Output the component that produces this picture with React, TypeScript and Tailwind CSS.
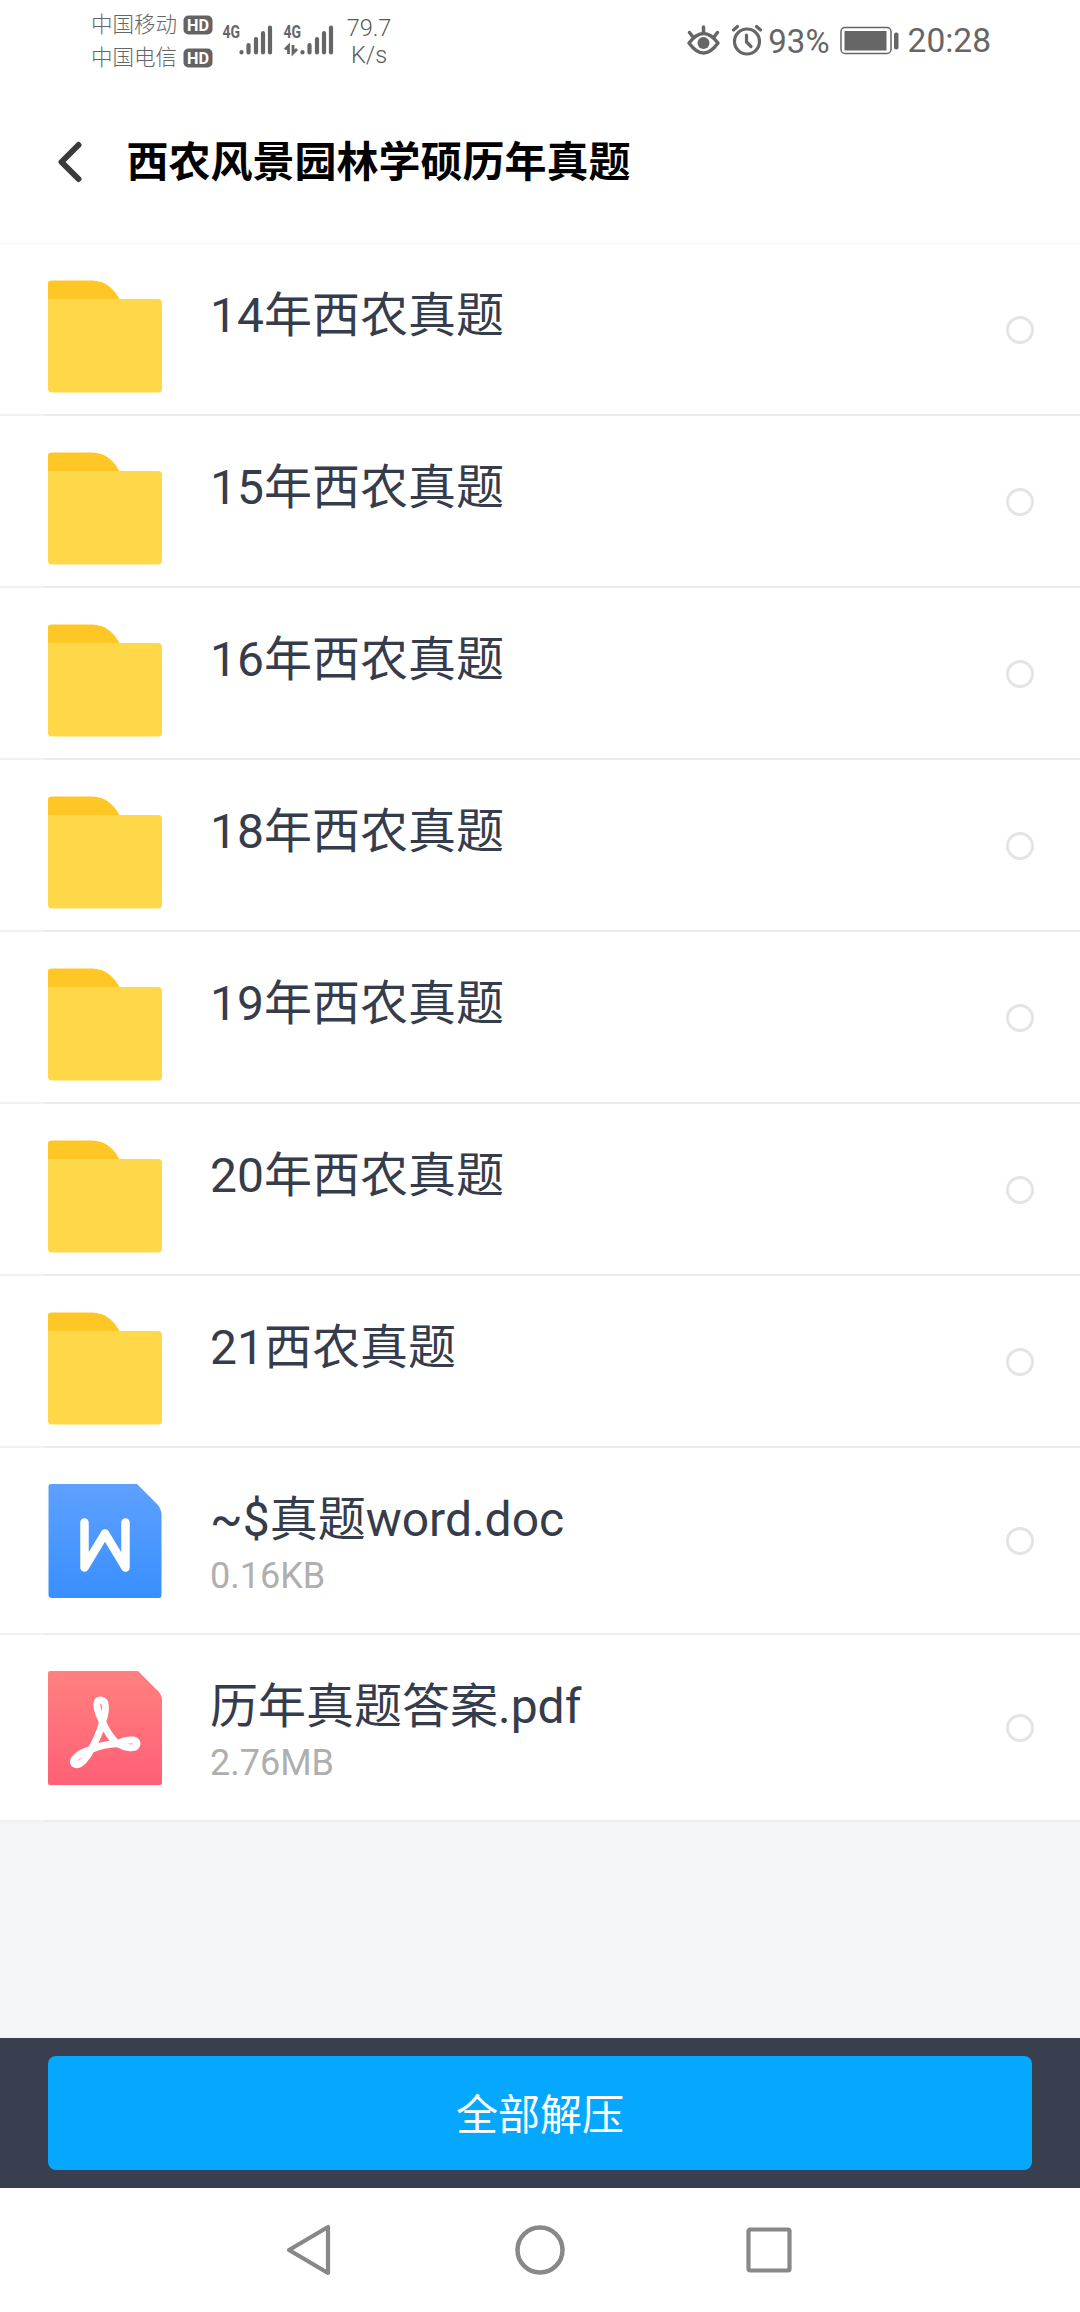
import React from 'react'

interface FileItem {
  name: string
  type: 'folder' | 'doc' | 'pdf'
  size?: string
}

const files: FileItem[] = [
  { name: '14年西农真题', type: 'folder' },
  { name: '15年西农真题', type: 'folder' },
  { name: '16年西农真题', type: 'folder' },
  { name: '18年西农真题', type: 'folder' },
  { name: '19年西农真题', type: 'folder' },
  { name: '20年西农真题', type: 'folder' },
  { name: '21西农真题', type: 'folder' },
  { name: '~$真题word.doc', type: 'doc', size: '0.16KB' },
  { name: '历年真题答案.pdf', type: 'pdf', size: '2.76MB' }
]

const FolderIcon: React.FC = () => (
  <svg width="114" height="114" viewBox="0 0 114 114" className="block">
    <path d="M0 2Q1 0.5 4 0.5H44C58 0.5 66 9 72 20V30H0Z" fill="#ffc726" />
    <path d="M0 19H110Q114 19 114 23V109Q114 112.5 110 112.5H4Q0 112.5 0 109Z" fill="#ffd84a" />
  </svg>
)

const DocIcon: React.FC = () => (
  <svg width="114" height="114" viewBox="0 0 114 114" className="block">
    <defs>
      <linearGradient id="doc" x1="0" y1="0" x2="0" y2="1">
        <stop offset="0" stopColor="#5ea0ff" />
        <stop offset="1" stopColor="#388fff" />
      </linearGradient>
    </defs>
    <path d="M3 0H89L109 20Q113.500 25 113.500 31V111Q113.500 114 111 114H4Q0.500 114 0.500 111V2Q0.500 0 3 0Z" fill="url(#doc)" />
    <path
      d="M36.500 38.500V83.500L57 49.500L77.500 83.500V38.500"
      fill="none"
      stroke="#fff"
      strokeWidth="8.500"
      strokeLinecap="round"
      strokeLinejoin="round"
    />
  </svg>
)

const PdfIcon: React.FC = () => (
  <svg width="114" height="114" viewBox="0 0 114 114" className="block">
    <defs>
      <linearGradient id="pdf" x1="0" y1="0" x2="0" y2="1">
        <stop offset="0" stopColor="#ff8080" />
        <stop offset="1" stopColor="#ff6076" />
      </linearGradient>
    </defs>
    <path d="M2 0H90L110 20Q114 24 114 29V112Q114 114 112 114H2Q0 114 0 112V2Q0 0 2 0Z" fill="url(#pdf)" />
    <path
      d="M54.500 51C50 42 45.500 29.500 52.500 29C59.500 29.500 58 41 54.500 51C58 59 63 67 69 72.500C79 68.500 89 67 89 73C88 79 77 77 69 72.500C60 73 51 75 43 78.500C40 86 31.500 96 26.500 93C22.500 89.500 31 81.500 43 78.500C48 70 52 61 54.500 51Z"
      fill="none"
      stroke="#fff"
      strokeWidth="7"
      strokeLinejoin="round"
    />
  </svg>
)

const HdBadge: React.FC = () => (
  <svg width="30" height="20" viewBox="0 0 30 20">
    <rect x="0.500" y="0.500" width="29" height="19" rx="5" fill="#636363" />
    <text x="4" y="16" fontSize="17" fontWeight="700" textLength="22" lengthAdjust="spacingAndGlyphs" fill="#fff">
      HD
    </text>
  </svg>
)

const Signal: React.FC<{ data?: boolean }> = ({ data }) => (
  <svg width="52" height="40" viewBox="0 -6 52 40" className="overflow-visible">
    <text x="0.500" y="15" fontSize="18.500" fontWeight="700" textLength="17.500" lengthAdjust="spacingAndGlyphs" fill="#666">
      4G
    </text>
    {data && (
      <path d="M5.500 31V23L2 26.500M10 22V30L14 26" fill="none" stroke="#666" strokeWidth="2.800" />
    )}
    <path
      d="M19.500 29.500V29M26.500 29.500V22M34 29.500V16M41 29.500V10M48 29.500V4.500"
      fill="none"
      stroke="#666"
      strokeWidth="4.200"
      strokeLinecap="round"
    />
  </svg>
)

const StatusBar: React.FC = () => (
  <div className="flex h-20 items-start justify-between pl-[91px] pr-[89px] text-[#666]">
    <div className="flex">
      {/* 运营商 */}
      <div className="flex flex-col pt-2 text-[21.500px] font-light">
        {['中国移动', '中国电信'].map(carrier => (
          <div key={carrier} className="flex h-[33px] items-center gap-[6px] leading-[33px]">
            <span>{carrier}</span>
            <HdBadge />
          </div>
        ))}
      </div>
      <div className="ml-[9px] flex gap-[9px] pt-[17px]">
        <Signal />
        <Signal data />
      </div>
      <div className="ml-[10px] w-[48px] pt-[15px] text-center text-[23.500px] font-light leading-[27px] text-[#5a5a5a]">
        <div>79.7</div>
        <div>K/s</div>
      </div>
    </div>

    <div className="flex h-20 items-center">
      <svg width="36" height="34" viewBox="0 0 36 34" fill="none" stroke="#666" strokeWidth="3.500" strokeLinecap="round">
        <path d="M3 20Q17.500 1 32 20Q17.500 40 3 20Z" strokeLinejoin="round" />
        <circle cx="17.500" cy="20" r="6" fill="#666" stroke="none" />
        <path d="M17.500 4V9M3.500 9.500L7 14M31.500 9.500L28 14" />
      </svg>
      <svg width="32" height="34" viewBox="0 0 32 34" fill="none" stroke="#666" strokeWidth="3.200" strokeLinecap="round" className="ml-[9px]">
        <circle cx="16" cy="18.500" r="12.500" />
        <path d="M15.500 12V19L20 23.500M2.500 7L6.500 3.500M29.500 7L25.500 3.500" />
      </svg>
      <span className="ml-[5px] pt-[3px] text-[33px]">93%</span>
      <svg width="60" height="30" viewBox="0 0 60 30" className="ml-[10px]">
        <rect x="1" y="2.500" width="50" height="26" rx="4" fill="none" stroke="#666" strokeWidth="1.500" />
        <rect x="4.500" y="6" width="42" height="19.500" fill="#666" />
        <rect x="54" y="7.500" width="4.500" height="17" rx="2" fill="#666" />
      </svg>
      <span className="ml-[8px] pt-[3px] text-[33.500px]">20:28</span>
    </div>
  </div>
)

const FileRow: React.FC<{ file: FileItem }> = ({ file }) => (
  <li className="bg-white">
    <div className={`flex px-12 pt-9 ${file.size ? 'h-[185px]' : 'h-[170px]'}`}>
      {file.type === 'folder' && <FolderIcon />}
      {file.type === 'doc' && <DocIcon />}
      {file.type === 'pdf' && <PdfIcon />}
      <div className="ml-12 flex-1 pt-px">
        <p className="text-[48px] leading-[70px] text-[#353c4b]">{file.name}</p>
        {file.size && <p className="text-[36px] leading-[42px] text-[#afafaf]">{file.size}</p>}
      </div>
      <span className={`-mr-0.5 h-7 w-7 rounded-full border-3 border-[#e4e4e4] ${file.size ? 'mt-[43px]' : 'mt-[36px]'}`} />
    </div>
    <div className="flex h-0.5 bg-[#ececec]">
      <div className="w-11 bg-[#f1f1f1]" />
    </div>
  </li>
)

const App: React.FC = () => {
  return (
    <div className="flex h-[2312px] w-[1080px] flex-col bg-white font-[Roboto,'Noto_Sans_CJK_SC',sans-serif]">
      <StatusBar />

      <header className="flex h-[164px] items-center border-b border-[#f5f5f5] pl-[57px]">
        <svg width="26" height="42" viewBox="0 0 26 42" className="mt-px">
          <path
            d="M21.500 4L4.500 21L21.500 38"
            fill="none"
            stroke="#3a3a3a"
            strokeWidth="6"
            strokeLinecap="round"
            strokeLinejoin="round"
          />
        </svg>
        <h1 className="ml-[43.500px] pt-0.5 text-[42px] font-bold leading-none text-black">西农风景园林学硕历年真题</h1>
      </header>

      {/* 文件列表 */}
      <main className="flex-1 bg-[#f4f5f7]">
        <ul>
          {files.map(file => (
            <FileRow key={file.name} file={file} />
          ))}
        </ul>
      </main>

      {/* 底部操作 */}
      <div className="h-[150px] bg-[#3a3f50] px-12 py-[18px]">
        <button className="h-full w-full rounded-lg bg-[#06a7ff] pt-1 text-[42px] text-white">全部解压</button>
      </div>

      {/* 系统导航键 */}
      <nav className="flex h-[124px] items-center justify-center gap-[179px]">
        <svg width="50" height="52" viewBox="0 0 50 52">
          <path d="M42 3V49L3 26Z" fill="none" stroke="#888" strokeWidth="4.200" strokeLinejoin="round" />
        </svg>
        <svg width="50" height="50" viewBox="0 0 50 50">
          <circle cx="25" cy="25" r="22.500" fill="none" stroke="#888" strokeWidth="4.500" />
        </svg>
        <svg width="50" height="50" viewBox="0 0 50 50">
          <rect x="4.500" y="4.500" width="41" height="41" rx="1.500" fill="none" stroke="#888" strokeWidth="4.200" />
        </svg>
      </nav>
    </div>
  )
}

export default App
